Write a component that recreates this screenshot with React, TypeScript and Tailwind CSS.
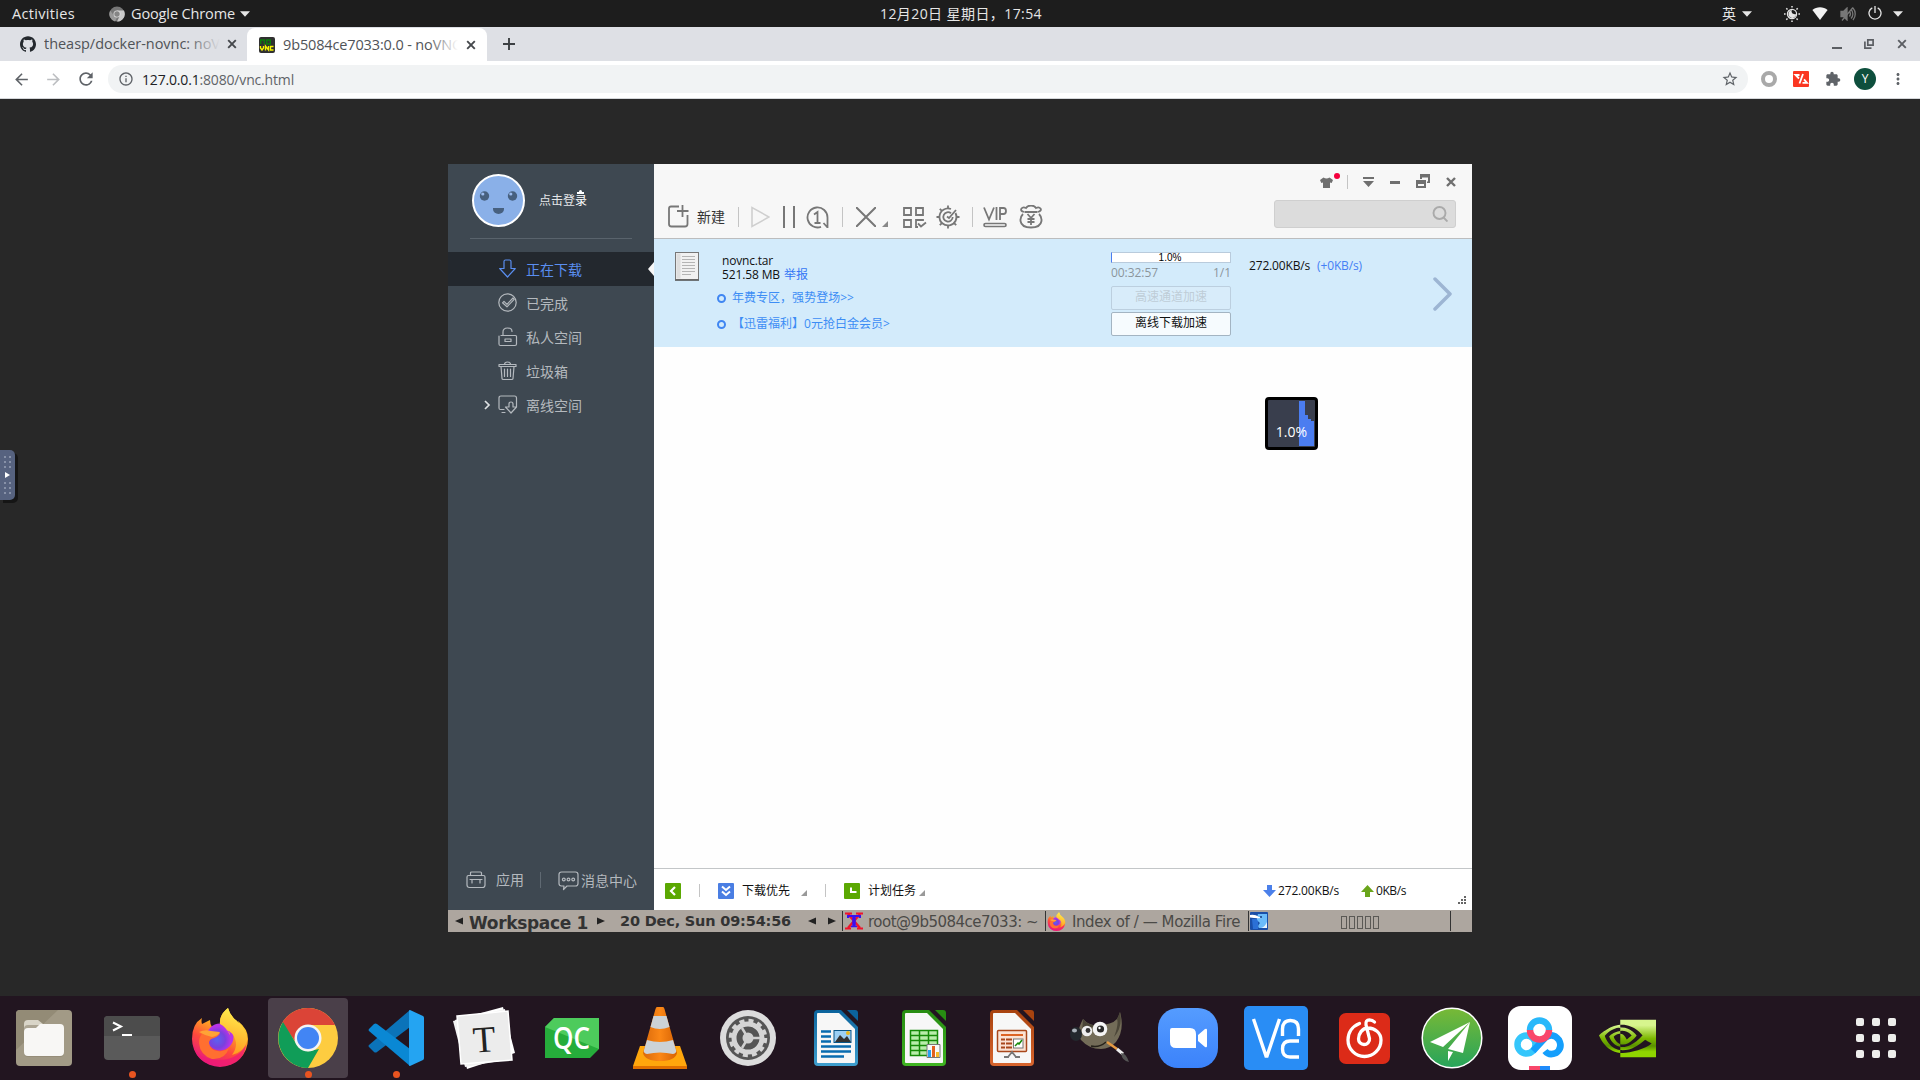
import React, { useLayoutEffect, useRef, useState } from "react";
import { SiGithub, SiNvidia } from "react-icons/si";
import { MdStarBorder, MdExtension, MdMoreVert, MdRefresh, MdArrowBack, MdArrowForward, MdInfoOutline } from "react-icons/md";

/* Single-line label whose letter spacing adapts so the text fills its box. */
function Label({ className, children }: { className: string; children: React.ReactNode }) {
  const box = useRef<HTMLSpanElement>(null);
  const text = useRef<HTMLSpanElement>(null);
  const [spacing, setSpacing] = useState(0);
  useLayoutEffect(() => {
    if (!box.current || !text.current) return;
    const count = Math.max(1, (text.current.textContent || "").length);
    const gap = box.current.getBoundingClientRect().width - text.current.getBoundingClientRect().width;
    setSpacing((s) => s + gap / count);
  }, []);
  return (
    <span ref={box} className={"block shrink-0 whitespace-nowrap " + className}>
      <span ref={text} style={{ letterSpacing: spacing + "px" }}>{children}</span>
    </span>
  );
}

const ui = "font-['Open_Sans','Noto_Sans_CJK_SC',sans-serif] ";
const cjk = "font-['Noto_Sans_CJK_SC',sans-serif] ";

function Caret({ className }: { className: string }) {
  return <svg viewBox="0 0 10 6" className={"h-[6px] w-[10px] shrink-0 " + className}><path d="M0 .3h10L5 5.8z" fill="currentColor" /></svg>;
}

function TopBar() {
  return (
    <div className={ui + "flex h-[27px] items-center bg-[#1d1d1d] text-[14.5px] leading-[27px] text-[#e6e6e6]"}>
      <Label className="ml-[12px] w-[63px]">Activities</Label>
      <svg viewBox="0 0 16 16" className="ml-[34px] h-4 w-4 shrink-0">
        <circle cx="8" cy="8" r="7.6" fill="#777" />
        <path d="M8 4.6h7A7.6 7.6 0 0 1 8 15.6L11 9.6z" fill="#c9c9c9" />
        <path d="M1.2 4.5 5 9.8l3 1.6-2 4A7.6 7.6 0 0 1 1.2 4.5z" fill="#999" />
        <circle cx="8" cy="8" r="3.5" fill="#ddd" /><circle cx="8" cy="8" r="2.7" fill="#858585" />
      </svg>
      <Label className="ml-[6px] w-[104px]">Google Chrome</Label>
      <Caret className="ml-[5px]" />
      <Label className="ml-[630px] w-[162px] text-[14px]">12月20日 星期日，17:54</Label>
      <span className="ml-[680px] w-[16px] text-[14px]">英</span>
      <Caret className="ml-[4px]" />
      <svg viewBox="0 0 16 16" className="ml-[32px] h-4 w-4 shrink-0" stroke="#e6e6e6" strokeWidth="1.5">
        <circle cx="8" cy="8" r="4.6" fill="none" strokeWidth="1.2" />
        <path d="M8 3.5c-1.5 3 1 5.500 4.400 4.500-.6 3.500-4 5-6.600 3C3.600 9 4 5 8 3.500z" fill="#e6e6e6" stroke="none" />
        <path d="M8 0v1.600M8 14.400V16M0 8h1.600M14.400 8H16M2.300 2.300l1.200 1.200M12.500 12.500l1.200 1.200M2.300 13.700l1.200-1.200M12.500 3.500l1.200-1.200" />
      </svg>
      <svg viewBox="0 0 16 13" className="ml-[12px] h-[13px] w-4 shrink-0"><path d="M8 13 .4 3C4.500-.7 11.500-.7 15.600 3z" fill="#f2f2f2" /></svg>
      <svg viewBox="0 0 16 14" className="ml-[12px] h-[14px] w-4 shrink-0" fill="none" stroke="#777" strokeWidth="1.300">
        <path d="M1 4.500h2.500L7 1v12L3.500 9.500H1z" fill="#777" /><path d="M9.500 4.500c1.200 1.500 1.200 3.500 0 5M11 2.500c2.500 2.500 2.500 6.500 0 9M13 1c3 3.500 3 8.500 0 12M2 13.500 13 .5" />
      </svg>
      <svg viewBox="0 0 14 14" className="-mt-[2px] ml-[12px] h-[14px] w-[14px] shrink-0" fill="none" stroke="#e6e6e6" strokeWidth="1.300"><path d="M4.300 1.800a6 6 0 1 0 5.400 0M7 0v7" /></svg>
      <Caret className="ml-[11px]" />
    </div>
  );
}

function Cross({ className }: { className: string }) {
  return <svg viewBox="0 0 10 10" className={"h-[10px] w-[10px] shrink-0 " + className}><path d="m1.200 1.200 7.600 7.600m0-7.600L1.200 8.800" stroke="currentColor" strokeWidth="1.900" /></svg>;
}

function TabStrip() {
  return (
    <div className={ui + "flex h-[34px] items-center bg-[#dee0e5] text-[14.5px] text-[#505357]"}>
      <SiGithub className="ml-[20px] h-4 w-4 shrink-0 text-[#24292e]" />
      <div className="relative ml-[8px] w-[176px] overflow-hidden">
        <Label className="w-[176px]">theasp/docker-novnc: noV</Label>
        <div className="absolute inset-y-0 right-0 w-[34px] bg-gradient-to-r from-transparent to-[#dee0e5]" />
      </div>
      <Cross className="ml-[7px] text-[#45484c]" />
      <div className="mt-px ml-[10px] flex h-[33px] w-[240px] shrink-0 items-center rounded-t-lg bg-white">
        <svg viewBox="0 0 16 16" className="ml-[12px] h-4 w-4 shrink-0">
          <rect width="16" height="16" rx="2" fill="#303030" />
          <path d="M1.700 7V3h3.600v4M7.700 3h3.600v4H7.700z" fill="none" stroke="#0a7d0a" strokeWidth="1.400" />
          <path d="M1.500 9v2l1.500 2 1.500-2V9M6.500 13.500V9l3 4V9M14.500 9.500h-3v3.500h3" fill="none" stroke="#f5f500" strokeWidth="1.400" />
        </svg>
        <div className="relative ml-[8px] w-[175px] overflow-hidden">
          <Label className="w-[178px]">9b5084ce7033:0.0 - noVNC</Label>
          <div className="absolute inset-y-0 right-0 w-[30px] bg-gradient-to-r from-transparent to-white" />
        </div>
        <Cross className="ml-[8px] text-[#45484c]" />
      </div>
      <svg viewBox="0 0 12 12" className="ml-[16px] h-3 w-3 shrink-0"><path d="M6 0v12M0 6h12" stroke="#3c4043" strokeWidth="1.900" /></svg>
      <div className="ml-auto flex items-center text-[#5b5e63]">
        <span className="mt-[7px] h-[2px] w-[10px] bg-current" />
        <svg viewBox="0 0 10 10" className="ml-[22px] h-[10px] w-[10px]" fill="none" stroke="currentColor" strokeWidth="1.700"><path d="M3.800.9h5.300v5.300H3.800zM.9 2.500v6.600H7.500" /></svg>
        <Cross className="mr-[13px] ml-[23px]" />
      </div>
    </div>
  );
}

function AddressBar() {
  return (
    <div className={ui + "flex h-[38px] items-center border-b border-[#d5d7da] bg-white pb-px text-[#5f6368]"}>
      <MdArrowBack className="ml-[12px] h-[19px] w-[19px] shrink-0" />
      <MdArrowForward className="ml-[13px] h-[19px] w-[19px] shrink-0 text-[#bcbec1]" />
      <MdRefresh className="ml-[13px] h-[20px] w-[20px] shrink-0" />
      <div className="ml-[12px] flex h-[28px] w-[1640px] shrink-0 items-center rounded-full bg-[#f1f3f4] text-[14px]">
        <MdInfoOutline className="ml-[10px] h-[16px] w-[16px] shrink-0" />
        <Label className="ml-[8px] w-[152px]"><span className="text-[#202124]">127.0.0.1</span>:8080/vnc.html</Label>
        <MdStarBorder className="mr-[9px] ml-auto h-[18px] w-[18px]" />
      </div>
      <span className="ml-[13px] h-4 w-4 shrink-0 rounded-full border-4 border-[#a9a9a9]" />
      <svg viewBox="0 0 16 16" className="ml-[16px] h-4 w-4 shrink-0">
        <rect width="16" height="16" rx="1" fill="#fa3722" />
        <path d="M6.500 4H2.500L6 7.500M10 3 6.500 12.500M9.500 11.800h4.500L11 8.300" fill="none" stroke="#fff" strokeWidth="1.800" />
      </svg>
      <MdExtension className="ml-[16px] h-[16px] w-[16px] shrink-0" />
      <span className="ml-[13px] flex h-[22px] w-[22px] shrink-0 items-center justify-center rounded-full bg-[#0e4f3d] text-[12px] text-white">Y</span>
      <MdMoreVert className="ml-[13px] h-[18px] w-[18px] shrink-0" />
    </div>
  );
}

const line = { fill: "none", stroke: "currentColor", strokeWidth: 1.2, strokeLinejoin: "round", strokeLinecap: "round" } as const;

const sideItems = [
  { label: "正在下载", icon: <path d="M6 5.500V2.500q0-1.500 1.500-1.500h4q1.500 0 1.500 1.500v7h4.300L9.500 18 1.700 9.500H6V5.500" /> },
  { label: "已完成", icon: <><circle cx="9.500" cy="9.500" r="8.700" /><path d="M4.500 9.800 6 8.300l3 3 6-6.300 1.200 1.300L9 13.800z" /></> },
  { label: "私人空间", icon: <><path d="M3 8.500h14.500q1 0 1 1V17q0 1.500-1.500 1.500H2.500Q1 18.500 1 17V9M5 8.500V5q0-4 4.500-4T14 4.500M7 12h6v2.500H7z" /></> },
  { label: "垃圾箱", icon: <path d="M1 5V3.500h17V5.500H1M6.500 3.500Q6.500 1 9.500 1t3 2.500M3 5.500l1 12q0 1 1.500 1h8q1.500 0 1.500-1l1-12M6.500 8v7.500M9.500 8v7.500M12.500 8v7.500" /> },
  { label: "离线空间", icon: <path d="M6 14.500H2.500Q1 14.500 1 13V3q0-2 2-2h13.500q2 0 2 2v9M4 17.500h3M11 12V9q0-2 2-2t2 2v3h3.500L13 18l-5.500-6H11" /> },
];

function Sidebar() {
  return (
    <div className={cjk + "flex w-[206px] shrink-0 flex-col bg-[#3e4851] text-[#b4b9be]"}>
      <div className="mx-[22px] flex h-[75px] items-center border-b border-[#59636c] pb-[2px]">
        <svg viewBox="0 0 53 53" className="ml-[2px] h-[53px] w-[53px] shrink-0">
          <circle cx="26.500" cy="26.500" r="25.500" fill="#8ab0e8" stroke="#fff" strokeWidth="2" />
          <circle cx="12.500" cy="22" r="4.700" fill="#47607f" /><circle cx="40.500" cy="22" r="4.700" fill="#47607f" />
          <circle cx="10.800" cy="20" r="1.600" fill="#9cbcf0" /><circle cx="38.800" cy="20" r="1.600" fill="#9cbcf0" />
          <path d="M21 34h11v1a5.500 5 0 0 1-11 0z" fill="#47607f" />
        </svg>
        <div className="relative ml-[14px] text-[12px] text-[#e4e6e8]">点击登<span className="text-white">录</span>
          <span className="absolute -top-[1px] left-[40px] h-[3px] w-[3px] rounded-full bg-white" />
          <span className="absolute top-[1px] left-[38px] h-[2px] w-[7px] bg-white" />
        </div>
      </div>
      <div className="mt-[13px]">
        {sideItems.map((it, i) => (
          <div key={i} className={i === 0 ? "flex h-[34px] items-center bg-[#23282e] pb-px text-[#5a8ef0]" : "flex h-[34px] items-center pb-px"}>
            <svg viewBox="0 0 7 10" className={i === 4 ? "ml-[36px] h-[10px] w-[7px]" : "invisible ml-[36px] h-[10px] w-[7px]"}><path d="m1 1 4 4-4 4" fill="none" stroke="#dfe2e4" strokeWidth="1.700" /></svg>
            <svg viewBox="0 0 20 20" className="ml-[7px] h-5 w-5" {...line}>{it.icon}</svg>
            <span className="ml-[8px] text-[14px] leading-none">{it.label}</span>
            {i === 0 && <svg viewBox="0 0 6 14" className="ml-auto h-[14px] w-[6px]"><path d="M6 0v14L0 7z" fill="#f7f7f7" /></svg>}
          </div>
        ))}
      </div>
      <div className="mt-auto mb-[19px] flex items-center text-[14px] leading-none">
        <svg viewBox="0 0 20 18" className="ml-[18px] h-[18px] w-5 shrink-0" {...line}><path d="M4.500 4.500V2q0-1 1-1h9q1 0 1 1v2.500M2.500 4.500h15q1.500 0 1.500 1.500v8q0 2.500-2.500 2.500h-13Q1 16.500 1 14V6q0-1.500 1.500-1.500M4 8.500h12M6 9v3M14 9v3" /></svg>
        <span className="-mt-[3px] ml-[10px]">应用</span>
        <span className="ml-[16px] h-4 w-px bg-[#5f6972]" />
        <svg viewBox="0 0 21 20" className="mt-[2px] ml-[17px] h-5 w-[21px] shrink-0" {...line}><path d="M3.500 1h14q2.500 0 2.500 2.500v9q0 2.500-2.500 2.500H9l-3.500 3.500L6 15H3.500Q1 15 1 12.500v-9Q1 1 3.500 1" /><circle cx="5.800" cy="8.500" r="1.400" /><circle cx="10.500" cy="8.500" r="1.400" /><circle cx="15.200" cy="8.500" r="1.400" /></svg>
        <span className="ml-[2px]">消息中心</span>
      </div>
    </div>
  );
}

function Rule({ className }: { className: string }) {
  return <span className={"w-px shrink-0 bg-[#c4c4c4] " + className} />;
}

function AppHeader() {
  const s = { fill: "none", stroke: "#777", strokeWidth: 1.8 } as const;
  return (
    <div className="flex h-[75px] border-b border-[#bcbdbe] bg-[#f7f7f7]">
      <div className={cjk + "mt-[40px] flex h-[26px] items-center"}>
        <svg viewBox="0 0 21 23" className="-mt-px ml-[14px] h-[23px] w-[21px]" {...s}><path d="M11 1.500H3Q1 1.500 1 3.500V19q0 2.500 2.500 2.500H17q2.500 0 2.500-2.500v-9M14.500 0v12M9 6h11.500" /></svg>
        <span className="-mt-[2px] ml-[8px] text-[14px] leading-none text-[#333]">新建</span>
        <Rule className="ml-[13px] h-[20px]" />
        <svg viewBox="0 0 19 22" className="ml-[12px] h-[22px] w-[19px]" fill="none" stroke="#cfcfcf" strokeWidth="1.600"><path d="M1 1.500v19L18 11z" /></svg>
        <svg viewBox="0 0 12 22" className="ml-[13px] h-[22px] w-3" {...s} strokeWidth={2}><path d="M1 0v22M11 0v22" /></svg>
        <svg viewBox="0 0 23 23" className="ml-[11px] h-[23px] w-[23px]" {...s}><path d="M15 20.800A10 10 0 1 1 21.500 11.500V22M21.500 21.500 17.500 17M8 8.500l3.500-2.500V17M8.500 17h6" /></svg>
        <Rule className="ml-[13px] h-[20px]" />
        <svg viewBox="0 0 20 20" className="ml-[13px] h-5 w-5" {...s} strokeWidth={2}><path d="m0 0 20 20M20 0 0 20" /></svg>
        <svg viewBox="0 0 6 6" className="mt-[13px] ml-[6px] h-[6px] w-[6px]"><path d="M6 0v6H0z" fill="#888" /></svg>
        <svg viewBox="0 0 24 21" className="ml-[15px] h-[21px] w-6" {...s}><path d="M1 1h7v7H1zM13 1h7v7h-7zM1 13h7v7H1zM20 14v-1h-7v7h2M15 16.500l3 3 5-4" /></svg>
        <svg viewBox="0 0 24 24" className="ml-[9px] h-6 w-6" {...s}><path d="M19.500 8A8.500 8.500 0 1 1 15 4M20.300 10.500a8.500 8.500 0 0 1-1 6" /><path d="M15 8.300A4.700 4.700 0 1 0 16.700 12M11 11.500 13 13l7-8" /><path d="M12 .5v3M12 20.500v3M.5 12h3M20.500 12h3M3.800 3.800l2.100 2.100M18.100 18.100l2.100 2.100M3.800 20.200l2.100-2.100" /></svg>
        <Rule className="ml-[12px] h-[20px]" />
        <svg viewBox="0 0 24 22" className="ml-[10px] h-[22px] w-6" {...s}><path d="m1 1.500 5 12 5-12M13.500 1v13M17 14V2h3.500q2.500 0 2.500 3t-2.500 3H17" /><rect x="1" y="17.500" width="22" height="3" rx="1.500" strokeWidth="1.700" /></svg>
        <svg viewBox="0 0 24 24" className="ml-[12px] h-6 w-6" {...s}><path d="M5 7Q1 6 2.500 3.500 4 1.500 7 3q1.500-2.500 5-2.500T17 3q3-1.500 4.500.5T19 7M5.500 7h13M4 9Q1 12 1.500 16q1 6.500 10.500 6.500T22.500 16q.5-4-2.500-7M8.500 9l3.500 4 3.500-4M12 13v7M8.500 14h7M8.500 17h7" /></svg>
      </div>
      <div className="mr-[16px] ml-auto w-[182px]">
        <div className="mt-[9px] flex h-[18px] items-center justify-end text-[#6f6f6f]">
          <div className="relative">
            <svg viewBox="0 0 13 11" className="h-[11px] w-[13px]"><path d="M3.500.5Q6.500 2.500 9.500.5L13 3l-1.300 3-1.700-.5V11H3V5.500L1.300 6 0 3z" fill="currentColor" /></svg>
            <span className="absolute -top-[4px] left-[14px] h-[6px] w-[6px] rounded-full bg-[#f5003d]" />
          </div>
          <Rule className="ml-[14px] h-[14px]" />
          <svg viewBox="0 0 11 10" className="ml-[15px] h-[10px] w-[11px]"><path d="M0 0h11v2H0zM0 4h11L5.500 10z" fill="currentColor" /></svg>
          <span className="mt-[1px] ml-[16px] h-[3px] w-[10px] bg-current" />
          <svg viewBox="0 0 14 14" className="-mt-[2px] ml-[16px] h-[14px] w-[14px]"><path d="M4 0h10v9h-3V5H4zM0 6h10v8H0zM2 10v2h6v-2z" fill="currentColor" fillRule="evenodd" /><path d="M6 3.500h6v4h-1.500V5H6z" fill="#f7f7f7" /></svg>
          <svg viewBox="0 0 10 10" className="ml-[16px] h-[10px] w-[10px]"><path d="m1 1 8 8m0-8L1 9" stroke="currentColor" strokeWidth="2.400" /></svg>
        </div>
        <div className="mt-[9px] flex h-[28px] items-center justify-end rounded-[3px] border border-[#cfcfcf] bg-[#dcdcdc] pr-[7px] pb-px">
          <svg viewBox="0 0 16 16" className="h-4 w-4" fill="none" stroke="#aaa" strokeWidth="1.900"><circle cx="7.500" cy="7" r="6" /><path d="m11.500 11.500 4 4" /></svg>
        </div>
      </div>
    </div>
  );
}

function Bullet({ children }: { children: React.ReactNode }) {
  return (
    <div className="flex h-[26px] items-center">
      <span className="-ml-[5px] h-[9px] w-[9px] shrink-0 rounded-full border-2 border-[#3f86f2]" />
      <span className="ml-[6px]">{children}</span>
    </div>
  );
}

function TaskRow() {
  return (
    <div className="flex h-[108px] bg-[#d3ebfb] font-['Open_Sans','Noto_Sans_CJK_SC',sans-serif] text-[12px] text-[#111]">
      <svg viewBox="0 0 26 29" className="mt-[13px] ml-[20px] h-[29px] w-[26px] shrink-0">
        <rect x="1.500" y=".5" width="23" height="27" fill="#f1f1f1" stroke="#777" /><path d="M1 28.200h24" stroke="#555" strokeWidth="1.200" />
        <rect x="2.500" y="1.500" width="4" height="25" fill="#dedede" />
        <path d="M8 4.500h13M8 7.500h13M8 10.500h13M8 13.500h13M8 16.500h13M8 19.500h13M8 22.500h9" stroke="#b4b4b4" />
      </svg>
      <div className="mt-[15px] ml-[22px] w-[389px] text-[#3c8df5]">
        <Label className="w-[51px] leading-[14px] text-[#111]">novnc.tar</Label>
        <div className="flex leading-[14px]"><Label className="w-[58px] text-[#111]">521.58 MB</Label><span className="ml-[4px] text-[#3377f5]">举报</span></div>
        <div className="mt-[3px]">
          <Bullet><Label className="w-[122px]">年费专区，强势登场&gt;&gt;</Label></Bullet>
          <Bullet><Label className="w-[158px]">【迅雷福利】0元抢白金会员&gt;</Label></Bullet>
        </div>
      </div>
      <div className="mt-[13px] w-[120px] shrink-0">
        <div className="flex h-[11px] items-center justify-center border border-[#b9cbdc] border-l-[#4a7df0] bg-white pr-[2px] font-['Liberation_Sans',sans-serif] text-[10px] leading-none text-black">1.0%</div>
        <div className="flex h-[23px] justify-between text-[12px] leading-[20px] text-[#8b959c]"><Label className="w-[47px]">00:32:57</Label><span>1/1</span></div>
        <div className="flex h-[24px] items-center justify-center rounded-[2px] border border-[#bccfdf] bg-[#d8ecfa] pb-[2px] leading-none text-[#bfcdd7]">高速通道加速</div>
        <div className="mt-[2px] flex h-[24px] items-center justify-center rounded-[2px] border border-[#a3b4c2] bg-[#f6fbfe] pb-[2px] leading-none">离线下载加速</div>
      </div>
      <Label className="mt-[18px] ml-[18px] w-[61px]">272.00KB/s</Label>
      <Label className="mt-[18px] ml-[7px] w-[45px] text-[#4580f5]">(+0KB/s)</Label>
      <svg viewBox="0 0 20 34" className="mt-[38px] mr-[19px] ml-auto h-[34px] w-5"><path d="m2 2 15 15L2 32" fill="none" stroke="#9db5d3" strokeWidth="3.500" strokeLinecap="round" strokeLinejoin="round" /></svg>
    </div>
  );
}

function Corner({ className }: { className: string }) {
  return <svg viewBox="0 0 6 6" className={"mt-[5px] h-[6px] w-[6px] shrink-0 " + className}><path d="M6 0v6H0z" fill="#999" /></svg>;
}

function AppFooter() {
  return (
    <div className="flex h-[42px] items-center border-t border-[#c3c6c8] bg-white pt-[2px] font-['Open_Sans','Noto_Sans_CJK_SC',sans-serif] text-[12px] text-[#111]">
      <svg viewBox="0 0 16 16" className="ml-[11px] h-4 w-4 shrink-0"><rect width="16" height="16" rx="1" fill="#5ba802" /><path d="m10 4-4 4 4 4" fill="none" stroke="#fff" strokeWidth="2.200" /></svg>
      <Rule className="ml-[18px] h-[13px]" />
      <svg viewBox="0 0 16 16" className="ml-[18px] h-4 w-4 shrink-0"><rect width="16" height="16" rx="1" fill="#4a7ee3" /><path d="m4 3.500 4 3.500 4-3.500M4 8.500 8 12l4-3.500" fill="none" stroke="#fff" strokeWidth="2" /></svg>
      <span className="ml-[8px] w-[48px] shrink-0">下载优先</span>
      <Corner className="ml-[11px]" />
      <Rule className="ml-[18px] h-[13px]" />
      <svg viewBox="0 0 16 16" className="ml-[18px] h-4 w-4 shrink-0"><rect width="16" height="16" rx="1" fill="#5ba802" /><path d="M7 4.500V9h5.500" fill="none" stroke="#fff" strokeWidth="2" /></svg>
      <span className="ml-[8px] w-[48px] shrink-0">计划任务</span>
      <Corner className="ml-[3px]" />
      <svg viewBox="0 0 13 12" className="ml-[338px] h-3 w-[13px] shrink-0"><path d="M4 0h5v5h4L6.500 12 0 5h4z" fill="#4b80ea" /></svg>
      <Label className="ml-[2px] w-[61px]">272.00KB/s</Label>
      <svg viewBox="0 0 13 12" className="ml-[22px] h-3 w-[13px] shrink-0"><path d="M4 12h5V7h4L6.500 0 0 7h4z" fill="#6aa51b" /></svg>
      <Label className="ml-[2px] w-[30px]">0KB/s</Label>
      <svg viewBox="0 0 8 8" className="mt-[19px] ml-[52px] h-2 w-2 shrink-0"><path d="M6 0h2v2H6zM3 3h2v2H3zM6 3h2v2H6zM0 6h2v2H0zM3 6h2v2H3zM6 6h2v2H6z" fill="#666" /></svg>
    </div>
  );
}

function Tri({ left, className }: { left?: boolean; className: string }) {
  return <svg viewBox="0 0 8 8" className={"h-2 w-2 shrink-0 " + className}><path d={left ? "M8 .5v7L0 4z" : "M0 .5v7L8 4z"} fill="#222" /></svg>;
}

function Firefox({ className }: { className: string }) {
  return (
    <svg viewBox="0 0 58 60" className={"shrink-0 " + className}>
      <defs>
        <linearGradient id="ffa" x1=".8" y1="0" x2=".3" y2="1"><stop offset="0" stopColor="#fff44f" /><stop offset=".35" stopColor="#ffb01f" /><stop offset=".65" stopColor="#ff4a3c" /><stop offset="1" stopColor="#e31587" /></linearGradient>
        <radialGradient id="ffb" cx=".4" cy=".6"><stop offset="0" stopColor="#5b62f0" /><stop offset=".6" stopColor="#7a40dd" /><stop offset="1" stopColor="#b733e8" /></radialGradient>
        <linearGradient id="ffc" x1=".7" y1="0" x2=".5" y2="1"><stop offset="0" stopColor="#fff250" /><stop offset="1" stopColor="#ff9a1f" /></linearGradient>
      </defs>
      <path d="M11 11q-1 3 0 6l8-4q0 4 2 7L29 17Q28 8 37 1q2 8 9 13 1 3 2 5 0-2-1-5 10 8 10 18A28 28 0 0 1 1 32Q1 17 11 11z" fill="url(#ffa)" />
      <circle cx="29" cy="30" r="13.500" fill="url(#ffb)" />
      <path d="M29 17Q28 8 37 1q2 8 9 13 11 10 10 20-3 11-15 14 6-8 3-16-2-7-9-9 4 2 4 5-4-8-10-11z" fill="url(#ffc)" />
      <path d="M9 26q6-3 11-1l9 1q-1 3-6 5-5 1-5 5 1 7 9 8 6 1 11-3-4 12-17 11Q9 48 8 36q0-6 3-9z" fill="#ff6f30" />
      <path d="M8 25q6-3 12-1l9 1q-2 4-8 5-6-1-13-5z" fill="#ffa436" />
      <path d="M2 36q4 17 26 17 18 0 27-15-3 21-26 21Q5 58 2 36z" fill="#ef1a75" opacity=".75" />
    </svg>
  );
}

function TaskBar() {
  return (
    <div className="flex h-[22px] shrink-0 items-center overflow-hidden bg-[#ada69f] font-['DejaVu_Sans',sans-serif] text-[15px] leading-[22px] text-[#4b4a47]">
      <Tri left className="ml-[7px]" />
      <Label className="mt-[3px] ml-[6px] w-[119px] text-[17px] font-bold text-[#333]">Workspace 1</Label>
      <Tri className="ml-[9px]" />
      <Label className="ml-[15px] w-[171px] text-[14.500px] font-bold text-[#333]">20 Dec, Sun 09:54:56</Label>
      <Tri left className="ml-[17px]" />
      <Tri className="ml-[12px]" />
      <span className="ml-[6px] h-[20px] w-px shrink-0 bg-[#333]" />
      <svg viewBox="0 0 18 18" className="ml-[2px] h-[18px] w-[18px] shrink-0">
        <path d="M0 1.500h7M11 1.500h7M0 16.500h6M12 16.500h6" stroke="#f0142c" strokeWidth="2" />
        <path d="m3 2 12 14M15 2 3 16" stroke="#f0142c" strokeWidth="2.500" />
        <path d="M3 6V4h12v2" stroke="#3a10f0" strokeWidth="2" fill="none" /><path d="M9 4v11" stroke="#3a10f0" strokeWidth="3.500" /><path d="M6 14.500h6" stroke="#3a10f0" strokeWidth="1.500" />
      </svg>
      <Label className="mt-px ml-[5px] w-[170px]">root@9b5084ce7033: ~</Label>
      <span className="ml-[7px] h-[20px] w-px shrink-0 bg-[#333]" />
      <Firefox className="ml-[1px] h-[19px] w-[19px]" />
      <Label className="mt-px ml-[6px] w-[168px]">Index of / — Mozilla Fire</Label>
      <span className="ml-[8px] h-[20px] w-px shrink-0 bg-[#333]" />
      <svg viewBox="0 0 18 18" className="ml-[1px] h-[18px] w-[18px] shrink-0">
        <rect width="18" height="18" rx="1" fill="#1a4fa8" /><path d="M2 7h6v10H3z" fill="#2b70d6" />
        <path d="M8 2h9v14H9q-2-2 1-5Q6 8 7 5z" fill="#6bbcfa" /><path d="M0 3q5-1 9 2l3 1Q6 6.500 0 5.500z" fill="#fff" /><path d="M11 16q4-1 6-6v6z" fill="#e8f4fd" /><circle cx="11" cy="5" r="1" fill="#123a80" />
      </svg>
      <div className="ml-[73px] flex gap-[2px] pt-[2px]">
        {[0, 1, 2, 3, 4].map((i) => <span key={i} className="h-[13px] w-[6px] border border-[#5b5955]" />)}
      </div>
      <span className="ml-[71px] h-[20px] w-px shrink-0 bg-[#333]" />
    </div>
  );
}

function SpeedBadge() {
  return (
    <div className="absolute top-[233px] left-[817px] flex h-[53px] w-[53px] rounded-[4px] border-3 border-black bg-[#393e4d]">
      <svg viewBox="0 0 47 47" className="h-full w-full"><path d="M31 1h6v14h3v4h3v2h3v25H31z" fill="#4b7df0" /></svg>
      <span className="absolute inset-x-0 top-[22px] text-center font-['Open_Sans',sans-serif] text-[14px] leading-[20px] text-white">1.0%</span>
    </div>
  );
}

function RemoteDesktop() {
  return (
    <div className="relative mx-auto mt-[65px] flex h-[768px] w-[1024px] flex-col">
      <div className="flex min-h-0 flex-1">
        <Sidebar />
        <div className="flex flex-1 flex-col bg-white">
          <AppHeader />
          <TaskRow />
          <div className="flex-1 bg-[#fefefe]" />
          <AppFooter />
        </div>
      </div>
      <TaskBar />
      <SpeedBadge />
    </div>
  );
}

function Office({ id, dark, light, children }: { id: string; dark: string; light: string; children: React.ReactNode }) {
  return (
    <svg viewBox="0 0 44 56" className="h-14 w-11">
      <defs><linearGradient id={id} x1="0" y1="0" x2="0" y2="1"><stop offset="0" stopColor={dark} /><stop offset="1" stopColor={light} /></linearGradient></defs>
      <path d="M4 0h23l17 17v35q0 4-4 4H4q-4 0-4-4V4q0-4 4-4z" fill={"url(#" + id + ")"} />
      <path d="M4 3h21l16 16v33q0 1-1 1H4q-1 0-1-1V4q0-1 1-1z" fill="#f7f7f7" />
      <path d="M33 0h8q3 0 3 3v8z" fill={dark} />
      {children}
    </svg>
  );
}

const dockIcons: { dot?: boolean; active?: boolean; icon: React.ReactNode }[] = [
  { icon: <svg viewBox="0 0 56 56" className="h-14 w-14"><rect width="56" height="56" rx="4" fill="#a29a86" /><path d="M0 40 42 0H4Q0 0 0 4z" fill="#938b76" /><path d="M8 14q0-4 4-4h10l5 4v10H8z" fill="#d9d5c8" /><rect x="8" y="15" width="40" height="32" rx="4" fill="#8d8571" opacity=".6" /><path d="M8 22q0-4 4-4h8l4-4h20q4 0 4 4v24q0 4-4 4H12q-4 0-4-4z" fill="#f8f7f5" /></svg> },
  { dot: true, icon: <svg viewBox="0 0 56 44" className="h-11 w-14"><rect width="56" height="44" rx="4" fill="#5a5a5a" /><path d="M4 0h48q4 0 4 4v16H0V4q0-4 4-4z" fill="#4c4c4c" /><path d="m9 6.500 8 4-8 4M18 19h10" fill="none" stroke="#fff" strokeWidth="2" /></svg> },
  { icon: <Firefox className="-mt-[2px] h-[60px] w-[58px]" /> },
  { dot: true, active: true, icon: <svg viewBox="0 0 60 60" className="h-[60px] w-[60px]"><circle cx="30" cy="30" r="30" fill="#fdcc40" /><path d="M4 15A30 30 0 0 1 57 17H30L17 33z" fill="#db4437" /><path d="M5 14 19 37q5 7 13 6l9-2-11 19A30 30 0 0 1 5 14z" fill="#109d58" /><circle cx="30" cy="30" r="13.500" fill="#f4f4f4" /><circle cx="30" cy="30" r="11" fill="#4285f4" /></svg> },
  { dot: true, icon: <svg viewBox="0 0 56 56" className="h-14 w-14"><path d="m1 37 5 5q1.500 1 3 0l33-25V0L1 35q-1 1 0 2z" fill="#0b73b9" /><path d="m1 19 5-5q1.500-1 3 0l33 25v17L1 21q-1-1 0-2z" fill="#0a88d4" /><path d="m42 0 13 6q1 .5 1 2v40q0 1.500-1 2l-13 6q-1 0-1-1V1q0-1 1-1z" fill="#24a4f2" /></svg> },
  { icon: <svg viewBox="0 0 62 62" className="h-[62px] w-[62px]"><path d="M2 13 50 0l12 46L14 62z" fill="#fff" /><path d="M0 14 52 2l7 50-47 8z" fill="#f3f3f3" /><path d="m4 9 51-5 4 49-51 4z" fill="#ececec" stroke="#fff" strokeWidth="1.500" /><text x="31" y="45" textAnchor="middle" fontFamily="Liberation Serif, serif" fontSize="37" fill="#222" transform="rotate(-4 31 31)">T</text></svg> },
  { icon: <svg viewBox="0 0 54 40" className="h-10 w-[54px]"><path d="M9 0h45v31l-9 9H0V9z" fill="#26ad3b" /><path d="M9 0h45v31L0 9z" fill="#4dcb5c" /><text x="26.500" y="31" textAnchor="middle" textLength="37" lengthAdjust="spacingAndGlyphs" fontFamily="Open Sans, sans-serif" fontSize="31" fontWeight="600" fill="#fff">QC</text></svg> },
  { icon: <svg viewBox="0 0 54 62" className="h-[62px] w-[54px]"><defs><linearGradient id="vl"><stop offset="0" stopColor="#d9690b" /><stop offset=".5" stopColor="#fb8716" /><stop offset="1" stopColor="#d66204" /></linearGradient></defs><path d="M7 39h40l7 20v3H0v-3z" fill="#ffa60c" /><path d="M0 59h54v3H0z" fill="#e07000" /><path d="M24 0h6q1 0 1.500 2L44 46q-2 8-17 8T10 46L22.500 2Q23 0 24 0z" fill="url(#vl)" /><path d="m20.500 9-3 11q9 4 19 0l-3-11zM14 33l-3 10q-1 3 3 4 13-3 26 0 4-1 3-4l-3-10q-13 4-26 0z" fill="#ccd2d6" /></svg> },
  { icon: <svg viewBox="0 0 56 56" className="h-14 w-14"><circle cx="28" cy="28" r="28" fill="#dcdcdc" /><circle cx="28" cy="28" r="22" fill="#555" /><circle cx="28" cy="28" r="17.500" fill="none" stroke="#d5d5d5" strokeWidth="3.500" strokeDasharray="5 4.160" /><circle cx="28" cy="28" r="14" fill="none" stroke="#d5d5d5" strokeWidth="5" /><circle cx="28" cy="28" r="9" fill="none" stroke="#555" strokeWidth="4" /><circle cx="28" cy="28" r="5.500" fill="#d0d0d0" /><path d="M28 28h12M28 28l-6-10M28 28l-6 10" stroke="#d0d0d0" strokeWidth="2.500" /></svg> },
  { icon: <Office id="ow" dark="#0b639c" light="#3f9fce"><path d="M7 21.500h10M7 26.500h10M7 31.500h10M7 36.500h30M7 41.500h30M7 46.500h23" stroke="#0a6cb0" strokeWidth="2.500" /><rect x="20" y="20.500" width="17" height="12" fill="#9cd0f5" stroke="#0a5688" /><path d="m21 32 5-7 4 4 3-3 4 6z" fill="#333" /><circle cx="34" cy="23" r="2" fill="#e9b91e" /></Office> },
  { icon: <Office id="oc" dark="#278c12" light="#3fb421"><path d="M8 20h28v26H8z" fill="#b9edaa" /><path d="M8.500 20.500h27v25h-27zM8 25.500h28M8 30.500h28M8 35.500h28M8 40.500h28M17.500 20v26M26.500 20v26" fill="none" stroke="#168a08" strokeWidth="1.500" /><path d="M25 34.500h13v13H25z" fill="#f8f8f8" stroke="#777" /><path d="M26 40h3v7h-3z" fill="#28a0ee" /><path d="M30 36h3v11h-3z" fill="#e0601f" /><path d="M34 42h3v5h-3z" fill="#f5b929" /></Office> },
  { icon: <Office id="oi" dark="#a8430f" light="#d8652e"><rect x="7.500" y="20.500" width="29" height="21" rx="1" fill="#fbe3d4" stroke="#a9471b" strokeWidth="1.500" /><path d="M11 25h22" stroke="#dd6424" strokeWidth="2" /><path d="M11 29.500h4M11 33.500h4M11 37.500h4M16 29.500h6M16 33.500h6M16 37.500h6" stroke="#a9471b" strokeWidth="1.800" /><rect x="23.500" y="29" width="9.500" height="9" fill="#fff" stroke="#777" /><path d="m25 36 3-3 1 1 3-4" stroke="#168a08" strokeWidth="1.500" fill="none" /><path d="M14 47h5M25 47h5M18 47l4-5 4 5" stroke="#777" strokeWidth="1.800" fill="none" /></Office> },
  { icon: <svg viewBox="0 0 60 52" className="h-[52px] w-[60px]"><path d="M13 7q6 7 14 6 15 0 20-6 2-3 3-7 5 18-4 30-6 7-15 7-12 0-20-9-6-6 2-21z" fill="#736c58" /><path d="M13 7q6 7 14 6-9 3-15 8zM50 0q3 15-6 25Q49 12 47 7z" fill="#4b4638" /><ellipse cx="6" cy="22" rx="6" ry="7" fill="#23282d" /><ellipse cx="4.500" cy="18.500" rx="2.500" ry="2" fill="#a9b1b8" /><circle cx="17" cy="19" r="5.300" fill="#eee" /><circle cx="18" cy="18.500" r="2.400" fill="#333" /><circle cx="30" cy="17" r="7.300" fill="#f5f5f5" /><circle cx="30.500" cy="17" r="3.600" fill="#292929" /><circle cx="29.500" cy="16" r="1.200" fill="#fff" /><path d="m21 34q8 2 15-4" stroke="#25221a" strokeWidth="1.500" fill="none" /><path d="m37 30 10 7" stroke="#e69a42" strokeWidth="2.500" /><path d="m47 37 6 5" stroke="#eee" strokeWidth="3" /><path d="M51 41q5 0 8 9-7-1-8-9z" fill="#555" /></svg> },
  { icon: <svg viewBox="0 0 60 60" className="h-[60px] w-[60px]"><defs><linearGradient id="zm" x1="0" y1="0" x2="0" y2="1"><stop offset="0" stopColor="#559cff" /><stop offset="1" stopColor="#3b82fa" /></linearGradient></defs><rect width="60" height="60" rx="20" fill="url(#zm)" /><path d="M14 20h18q6 0 6 6v14H18q-6 0-6-6V22q0-2 2-2zM40 27l7-6q2-1 2 1v16q0 2-2 1l-7-6z" fill="#fff" /></svg> },
  { icon: <svg viewBox="0 0 64 64" className="h-16 w-16"><rect width="64" height="64" rx="5" fill="#298df5" /><path d="M9.500 13 22 50h1L35.500 13M38.500 30V23q0-8.500 8-8.500t8 8.500v7M55 35H46q-7.500 0-7.500 8t7.500 8h9" fill="none" stroke="#fff" strokeWidth="3.400" /></svg> },
  { icon: <svg viewBox="0 0 51 51" className="h-[51px] w-[51px]"><rect width="51" height="51" rx="7" fill="#dc2b18" /><path d="M20.500 10.500C13 13.500 9 20 9 27a16.500 16.500 0 0 0 33 0c0-7-6-12-13-12-6 0-9.500 6-9.500 11 0 3 2.500 5.500 5.500 5.500s6-2.500 5.500-6L27 12q-.7-5 3.500-5.200 3 0 5 2.200" fill="none" stroke="#fff" strokeWidth="3.300" strokeLinecap="round" /></svg> },
  { icon: <svg viewBox="0 0 62 62" className="h-[62px] w-[62px]"><defs><linearGradient id="pp" x1="0" y1="0" x2="0" y2="1"><stop offset="0" stopColor="#78b936" /><stop offset="1" stopColor="#26a45b" /></linearGradient></defs><circle cx="31" cy="31" r="29.800" fill="url(#pp)" stroke="#fff" strokeWidth="1.500" /><path d="M49 15 9 35l13 5zM49 15 27 42l15 4zM27 44l5 1-5 9z" fill="#fff" /></svg> },
  { icon: <svg viewBox="0 0 64 64" className="h-16 w-16"><rect width="64" height="64" rx="13" fill="#fff" /><g fill="none" strokeWidth="6.500"><circle cx="18.500" cy="38.500" r="9" stroke="#35c6fb" /><path d="m25 45 12-13q8-6 14 2 4 8-3 13-7 3-11-2" stroke="#159ffc" /><path d="M22 24a9.500 9.500 0 0 1 19 0" stroke="#29b8fa" /><path d="M22 24a9.500 9.500 0 0 0 19 0" stroke="#f9476b" /></g><path d="M21 60h11v4H21z" fill="#f9476b" /><path d="M32 60h10v4H32z" fill="#1f8bfa" /></svg> },
  { icon: <><svg className="h-0 w-0"><defs><linearGradient id="nv" x1="0" y1="0" x2="0" y2="1"><stop offset="0.150" stopColor="#d7f58e" /><stop offset=".5" stopColor="#7cb800" /><stop offset=".7" stopColor="#5a9200" /><stop offset=".85" stopColor="#8fd400" /></linearGradient></defs></svg><SiNvidia className="-ml-[2px] h-[57px] w-[57px] shrink-0 fill-[url(#nv)]" /></> },
];

function Dock() {
  return (
    <div className="flex h-[84px] items-center bg-[#221520]">
      {dockIcons.map((d, i) => (
        <div key={i} className="flex w-[88px] justify-center">
          <div className={d.active ? "relative flex h-20 w-20 items-center justify-center rounded-[4px] bg-[#4a3f49]" : "relative flex h-20 w-20 items-center justify-center"}>
            {d.icon}
            {d.dot && <span className="absolute bottom-0 left-[37px] h-[7px] w-[7px] rounded-full bg-[#e95420]" />}
          </div>
        </div>
      ))}
      <div className="mr-[24px] ml-auto grid grid-cols-3 gap-2">
        {Array.from({ length: 9 }, (_, i) => <span key={i} className="h-2 w-2 rounded-[2px] bg-[#eeeeec]" />)}
      </div>
    </div>
  );
}

function PanelHandle() {
  return (
    <div className="absolute top-[351px] left-0 flex h-[50px] w-[15px] items-center rounded-r-[5px] bg-[#56627f] shadow-[3px_3px_0_#151515]">
      <svg viewBox="0 0 15 50" className="h-[50px] w-[15px]">
        <path d="M4 7h2M9 7h2M4 12h2M9 12h2M4 17h2M9 17h2M4 33h2M9 33h2M4 38h2M9 38h2M4 43h2M9 43h2" stroke="#8791a8" strokeWidth="2" />
        <path d="M5 22v6l5-3z" fill="#fff" />
      </svg>
    </div>
  );
}

export default function App() {
  return (
    <div className="flex h-[1080px] w-[1920px] flex-col overflow-hidden bg-[#282828]">
      <TopBar />
      <TabStrip />
      <AddressBar />
      <div className="relative flex-1">
        <PanelHandle />
        <RemoteDesktop />
      </div>
      <Dock />
    </div>
  );
}
